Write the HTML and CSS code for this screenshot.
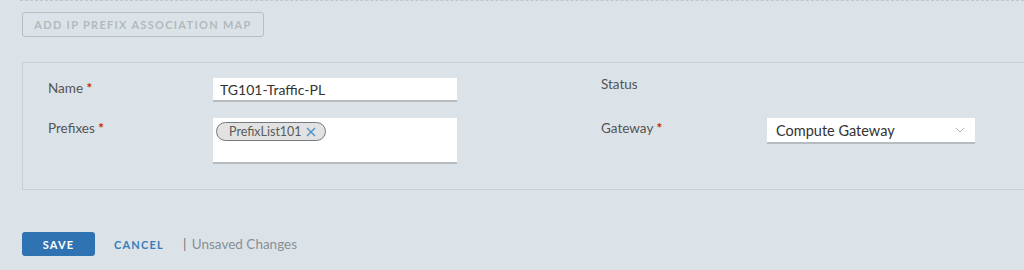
FILE: index.html
```html
<!DOCTYPE html>
<html lang="en">

<head>
    <meta charset="UTF-8">
    <meta name="viewport" content="width=device-width, initial-scale=1.0">
    <title>IP Prefix Association Map</title>
    <link rel="stylesheet" href="styles.css">
</head>

<body>

    <div class="page">
        <div class="divider"></div>

        <button type="button" class="btn-outline" disabled>Add IP Prefix Association Map</button>

        <!-- Edit form for the map -->
        <div class="panel">
            <div class="form-grid">
                <label class="field-label">Name <span class="req">*</span></label>
                <input type="text" class="text-input" value="TG101-Traffic-PL">
                <div class="spacer"></div>
                <label class="field-label status">Status</label>
                <div></div>

                <label class="field-label">Prefixes <span class="req">*</span></label>
                <div class="tag-box">
                    <span class="chip">PrefixList101
                        <svg width="10" height="10" viewBox="0 0 10 10">
                            <path d="M1 1 L9 9 M9 1 L1 9" stroke="#4a8cc7" stroke-width="1.3" fill="none" />
                        </svg>
                    </span>
                </div>
                <div class="spacer"></div>
                <label class="field-label">Gateway <span class="req">*</span></label>
                <div class="select">
                    <span>Compute Gateway</span>
                    <svg width="10" height="6" viewBox="0 0 10 6">
                        <path d="M1 1 L5 5 L9 1" stroke="#b0b4b8" stroke-width="1" fill="none" />
                    </svg>
                </div>
            </div>
        </div>

        <div class="actions">
            <button type="button" class="btn-primary">Save</button>
            <button type="button" class="btn-link">Cancel</button>
            <span class="unsaved"><span class="bar">|</span> Unsaved Changes</span>
        </div>
    </div>

</body>

</html>
```

FILE: styles.css
```css
html,
body {
    margin: 0;
    overflow: hidden;
}

body {
    font-family: Lato, "Open Sans", sans-serif;
    background-color: #dce3e8;
    color: #565656;
}

.page {
    height: 270px;
}

.divider {
    border-top: 1px dashed #bfc7cc;
    margin-left: 20px;
}

.btn-outline {
    display: block;
    margin: 11px 0 0 22px;
    width: 242px;
    height: 25px;
    padding: 0;
    font-family: inherit;
    font-size: 11px;
    font-weight: 700;
    letter-spacing: 1.3px;
    text-transform: uppercase;
    color: #b3b9bd;
    background: transparent;
    border: 1px solid #b8bfc4;
    border-radius: 3px;
}

/* the panel runs on past the right edge of the window */
.panel {
    margin: 25px 0 0 22px;
    border: 1px solid #c9d0d4;
    border-right: none;
    padding: 15px 0 25px 25px;
}

.form-grid {
    display: grid;
    grid-template-columns: 165px 244px 144px 166px 208px;
    grid-template-rows: 24px 46px;
    row-gap: 16px;
}

.field-label {
    font-size: 13.5px;
    line-height: 20px;
    color: #545454;
}

.field-label.status {
    margin-top: -4px;
}

.req {
    color: #c92100;
    font-weight: 700;
}

.text-input {
    box-sizing: border-box;
    width: 244px;
    height: 24px;
    border: none;
    border-bottom: 2px solid #b5bbbf;
    padding: 0 7px;
    font-family: inherit;
    font-size: 14px;
    color: #333;
    background: #fff;
}

.tag-box {
    box-sizing: border-box;
    background: #fff;
    border-bottom: 2px solid #b5bbbf;
    padding: 2px 3px;
}

.chip {
    display: inline-flex;
    align-items: center;
    gap: 4px;
    box-sizing: border-box;
    height: 19px;
    padding: 0 9px 0 12px;
    font-size: 12.5px;
    color: #5b5b5b;
    background: #e2e2e2;
    border: 1px solid #737a80;
    border-radius: 10px;
}

.select {
    display: flex;
    align-items: center;
    justify-content: space-between;
    box-sizing: border-box;
    height: 26px;
    padding: 0 10px 0 9px;
    background: #fff;
    border-bottom: 2px solid #b5bbbf;
    font-size: 14.5px;
    color: #333;
}

.actions {
    display: flex;
    align-items: center;
    margin: 42px 0 0 22px;
}

.btn-primary {
    width: 73px;
    height: 24px;
    padding: 0;
    font-family: inherit;
    font-size: 11px;
    font-weight: 700;
    letter-spacing: 1.2px;
    text-transform: uppercase;
    color: #fff;
    background-color: #3073b3;
    border: none;
    border-radius: 3px;
}

.btn-link {
    margin-left: 19px;
    padding: 0;
    font-family: inherit;
    font-size: 11px;
    font-weight: 700;
    letter-spacing: 1.2px;
    text-transform: uppercase;
    color: #3a7cb8;
    background: none;
    border: none;
}

.unsaved {
    margin-left: 19px;
    font-size: 13.5px;
    color: #8a8f93;
}

.bar {
    color: #6f7579;
    margin-right: 2px;
}
```
